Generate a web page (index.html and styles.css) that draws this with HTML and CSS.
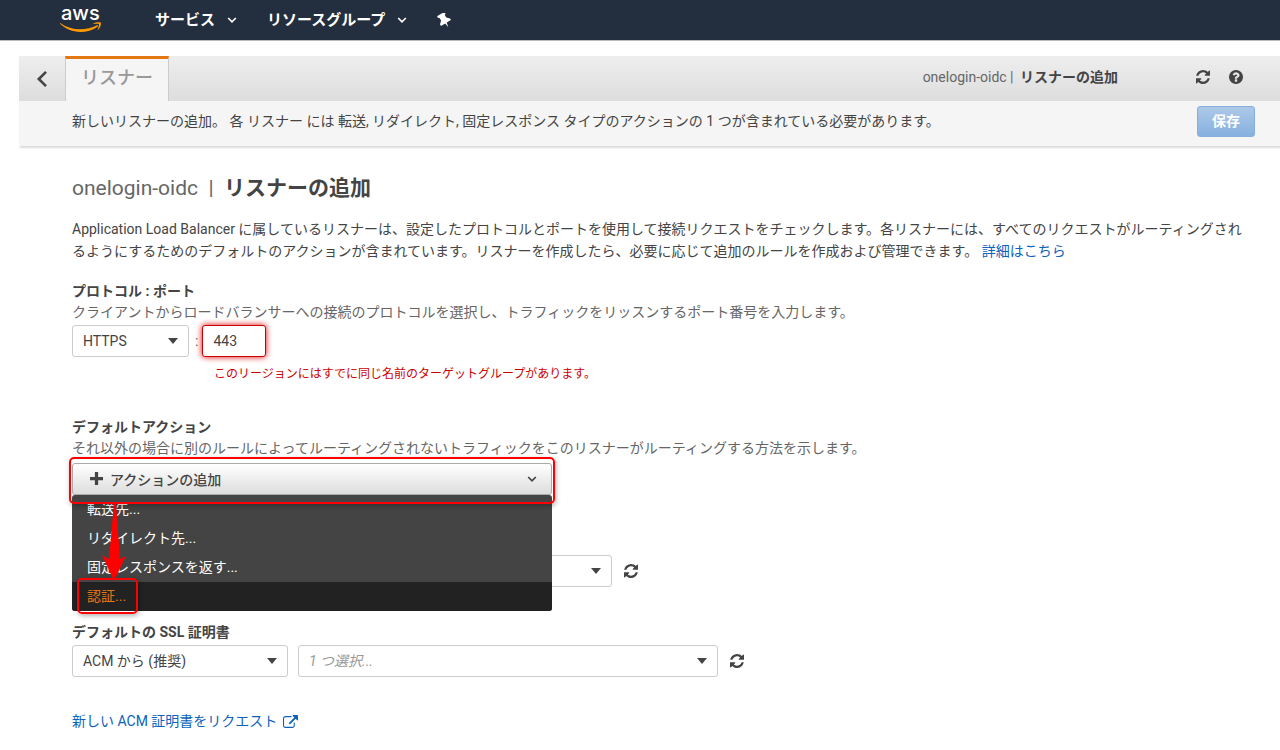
FILE: index.html
```html
<!DOCTYPE html>
<html lang="ja">
<head>
    <meta charset="UTF-8">
    <meta name="viewport" content="width=device-width, initial-scale=1.0">
    <title>リスナーの追加</title>
    <link rel="stylesheet" href="styles.css">
</head>
<body>
    <!-- Shared icons -->
    <svg class="sprite" aria-hidden="true">
        <symbol id="refresh" viewBox="0 0 1536 1536">
            <path d="M1511 928q0 5-1 7-64 268-268 434.5t-478 166.5q-146 0-282.5-55t-243.5-157l-129 129q-19 19-45 19t-45-19-19-45v-448q0-26 19-45t45-19h448q26 0 45 19t19 45-19 45l-137 137q71 66 161 102t187 36q134 0 250-65t186-179q11-17 53-117 8-23 30-23h192q13 0 22.5 9.5t9.5 22.5zm25-800v448q0 26-19 45t-45 19h-448q-26 0-45-19t-19-45 19-45l138-138q-148-137-349-137-134 0-250 65t-186 179q-11 17-53 117-8 23-30 23h-199q-13 0-22.5-9.5t-9.5-22.5v-7q65-268 270-434.5t480-166.5q146 0 284 55.5t245 156.5l130-129q19-19 45-19t45 19 19 45z"/>
        </symbol>
        <symbol id="chevron" viewBox="0 0 10 10">
            <path d="M1.2 3 5 6.8 8.8 3" fill="none" stroke="currentColor" stroke-width="1.7"/>
        </symbol>
    </svg>

    <header class="navbar">
        <a class="logo" href="#" aria-label="AWS">
            <svg width="44" height="40" viewBox="0 0 44 40">
                <text class="logo-text" x="1" y="20">aws</text>
                <path fill="#f90" d="M.6 23.200C6.500 27.200 13 29.200 20 29.200c6 0 12-1.400 17-3.900.8-.4 1.600.5.8 1.200C33 30.200 26.500 32 20.300 32 12.500 32 5.600 29 .4 24.100c-.6-.6-.3-1.200.2-.9z"/>
                <path fill="#f90" d="M33.400 23.500c2-1.500 5.400-1.600 7.200-1 .9.300.1 4.800-2.200 7-.4.400-.9.200-.6-.3.600-1.500 1.600-4.300 1.100-4.900-.6-.7-3.500-.4-5.200-.2-.5.1-.7-.3-.3-.6z"/>
            </svg>
        </a>
        <nav class="nav-links">
            <a href="#">サービス <svg class="chev"><use href="#chevron"/></svg></a>
            <a href="#">リソースグループ <svg class="chev"><use href="#chevron"/></svg></a>
            <a href="#" aria-label="ピン留め">
                <svg class="pin" viewBox="0 0 14 14">
                    <path transform="rotate(-30 7 7)" fill="currentColor" d="M3 0h8v2L9.800 2.600v2.900L12.400 8v1.700H7.800L7 14.200 6.200 9.700H1.600V8l2.600-2.500V2.600L3 2z"/>
                </svg>
            </a>
        </nav>
    </header>

    <div class="panel">
        <div class="tabbar">
            <button class="back" type="button" aria-label="戻る">
                <svg width="12" height="18" viewBox="0 0 12 18"><path d="M10 1.800 2.800 9l7.200 7.200" fill="none" stroke="#444" stroke-width="2.600"/></svg>
            </button>
            <a class="tab" href="#">リスナー</a>
            <div class="crumbs">onelogin-oidc | <b>リスナーの追加</b></div>
            <div class="tools">
                <button class="icon-btn" type="button" aria-label="更新"><svg class="icon"><use href="#refresh"/></svg></button>
                <button class="icon-btn" type="button" aria-label="ヘルプ">
                    <svg class="icon" viewBox="0 0 1536 1536"><path d="M896 1248v-192q0-14-9-23t-23-9h-192q-14 0-23 9t-9 23v192q0 14 9 23t23 9h192q14 0 23-9t9-23zm256-672q0-88-55.5-163t-138.5-116-170-41q-243 0-371 213-15 24 8 42l132 100q7 6 19 6 16 0 25-12 53-68 86-92 34-24 86-24 48 0 85.5 26t37.5 59q0 38-20 61t-68 45q-63 28-115.5 86.5t-52.5 125.5v36q0 14 9 23t23 9h192q14 0 23-9t9-23q0-19 21.5-49.5t54.5-49.5q32-18 49-28.5t46-35 44.5-48 28-60.5 12.5-81zm384 192q0 209-103 385.5t-279.5 279.5-385.5 103-385.5-103-279.5-279.5-103-385.5 103-385.5 279.5-279.5 385.5-103 385.5 103 279.5 279.5 103 385.5z"/></svg>
                </button>
            </div>
        </div>
        <div class="infobar">
            <span>新しいリスナーの追加。 各 リスナー には 転送, リダイレクト, 固定レスポンス タイプのアクションの 1 つが含まれている必要があります。</span>
            <button class="save" type="button">保存</button>
        </div>
    </div>

    <main>
        <h1><span>onelogin-oidc &nbsp;|</span> &nbsp;リスナーの追加</h1>
        <p class="intro">Application Load Balancer に属しているリスナーは、設定したプロトコルとポートを使用して接続リクエストをチェックします。各リスナーには、すべてのリクエストがルーティングされるようにするためのデフォルトのアクションが含まれています。リスナーを作成したら、必要に応じて追加のルールを作成および管理できます。 <a href="#">詳細はこちら</a></p>

        <!-- Protocol and port -->
        <section class="field">
            <label class="title" for="protocol">プロトコル : ポート</label>
            <p class="hint">クライアントからロードバランサーへの接続のプロトコルを選択し、トラフィックをリッスンするポート番号を入力します。</p>
            <div class="row">
                <div class="select protocol">
                    <select id="protocol"><option>HTTPS</option></select>
                </div>
                <span class="colon">:</span>
                <input class="port" type="text" value="443" aria-label="ポート" aria-describedby="portError">
            </div>
            <p class="error" id="portError">このリージョンにはすでに同じ名前のターゲットグループがあります。</p>
        </section>

        <!-- Default action -->
        <section class="field action">
            <h2 class="title">デフォルトアクション</h2>
            <p class="hint">それ以外の場合に別のルールによってルーティングされないトラフィックをこのリスナーがルーティングする方法を示します。</p>
            <div class="dropdown">
                <button class="add" type="button">
                    <svg class="plus" viewBox="0 0 12 12"><path d="M4.500 0h3v4.500H12v3H7.500V12h-3V7.500H0v-3h4.500z"/></svg>
                    アクションの追加
                    <svg class="chev"><use href="#chevron"/></svg>
                </button>
                <ul class="menu">
                    <li><a href="#">転送先...</a></li>
                    <li><a href="#">リダイレクト先...</a></li>
                    <li><a href="#">固定レスポンスを返す...</a></li>
                    <li><a class="active" href="#">認証...</a></li>
                </ul>
                <div class="mark mark-button"></div>
                <svg class="arrow" viewBox="0 0 24 78"><path fill="#f00" d="M12 0h2l4 56 6-3-12 25L0 52l7 4z"/></svg>
                <div class="mark mark-item"></div>
            </div>
        </section>

        <section class="field policy">
            <div class="row">
                <div class="select policy-select">
                    <select aria-label="セキュリティポリシー"><option></option></select>
                </div>
                <button class="icon-btn" type="button" aria-label="更新"><svg class="icon"><use href="#refresh"/></svg></button>
            </div>
        </section>

        <!-- Certificate -->
        <section class="field cert">
            <label class="title" for="certSource">デフォルトの SSL 証明書</label>
            <div class="row">
                <div class="select cert-source">
                    <select id="certSource"><option>ACM から (推奨)</option></select>
                </div>
                <div class="select cert-name">
                    <select class="empty" aria-label="証明書"><option>1 つ選択...</option></select>
                </div>
                <button class="icon-btn" type="button" aria-label="更新"><svg class="icon"><use href="#refresh"/></svg></button>
            </div>
        </section>

        <a class="request" href="#">新しい ACM 証明書をリクエスト
            <svg class="external" viewBox="0 0 1792 1664"><path d="M1408 928v320q0 119-84.5 203.5t-203.5 84.5h-832q-119 0-203.5-84.5t-84.5-203.5v-832q0-119 84.5-203.5t203.5-84.5h704q14 0 23 9t9 23v64q0 14-9 23t-23 9h-704q-66 0-113 47t-47 113v832q0 66 47 113t113 47h832q66 0 113-47t47-113v-320q0-14 9-23t23-9h64q14 0 23 9t9 23zm384-864v512q0 26-19 45t-45 19-45-19l-176-176-652 652q-10 10-23 10t-23-10l-114-114q-10-10-10-23t10-23l652-652-176-176q-19-19-19-45t19-45 45-19h512q26 0 45 19t19 45z"/></svg>
        </a>
    </main>
</body>
</html>
```
FILE: styles.css
```css
* {
    box-sizing: border-box;
}
body, button, input, select {
    font-family: Roboto, "Noto Sans CJK JP", sans-serif;
    font-size: 14px;
    color: #444;
}
body {
    margin: 0;
    background: #fff;
    line-height: 21px;
}
h1, h2, p, ul {
    margin: 0;
    padding: 0;
}
a {
    color: #0d62bc;
    text-decoration: none;
}
button {
    cursor: pointer;
}
.sprite {
    display: none;
}

/* Top navigation */
.navbar {
    display: flex;
    align-items: center;
    height: 41px;
    padding-left: 60px;
    background: #232f3e;
    border-bottom: 1px solid #bbb;
}
.logo {
    display: flex;
    width: 44px;
    margin-right: 51px;
}
.logo-text {
    font: 500 20px Inter, sans-serif;
    fill: #fff;
}
.nav-links {
    display: flex;
    gap: 30px;
}
.nav-links a {
    display: flex;
    align-items: center;
    gap: 12px;
    color: #fff;
    font-size: 15px;
    font-weight: bold;
}
.chev {
    width: 10px;
    height: 10px;
}
.pin {
    width: 15px;
    height: 15px;
}

/* Tab bar and info bar */
.panel {
    margin: 15px 0 0 19px;
    background: #f5f5f5;
    box-shadow: 1px 2px 2px rgba(0, 0, 0, 0.15);
}
.tabbar {
    display: flex;
    align-items: center;
    height: 45px;
    background: linear-gradient(#eee, #ddd);
}
.back {
    width: 46px;
    height: 45px;
    padding: 0;
    border: none;
    background: none;
}
.back svg {
    vertical-align: middle;
}
.tab {
    height: 45px;
    padding: 0 15px;
    border: 1px solid #ccc;
    border-width: 3px 1px 0;
    border-top-color: #e47911;
    background: #f5f5f5;
    color: #999;
    font-size: 18px;
    font-weight: 500;
    line-height: 38px;
}
.crumbs {
    margin-left: auto;
    padding-bottom: 2px;
    color: #666;
}
.crumbs b {
    margin-left: 3px;
    color: #444;
}
.tools {
    display: flex;
    gap: 19px;
    margin: 0 37px 0 78px;
    padding-bottom: 4px;
}
.icon-btn {
    display: flex;
    padding: 0;
    border: none;
    background: none;
}
.icon {
    width: 14px;
    height: 14px;
    fill: #444;
}
.infobar {
    display: flex;
    justify-content: space-between;
    height: 45px;
    padding: 5px 25px 0 53px;
    line-height: 30px;
}
.save {
    width: 58px;
    height: 31px;
    padding: 0 0 3px;
    border: 1px solid #85b0de;
    border-radius: 3px;
    background: linear-gradient(#adc8e8, #86b1de);
    color: #fff;
    font-weight: bold;
}

/* Form */
main {
    padding: 26px 30px 20px 72px;
}
h1 {
    font-size: 21px;
    line-height: 32px;
}
h1 span {
    color: #666;
    font-weight: normal;
}
.intro {
    margin-top: 14px;
    line-height: 22px;
}
.field {
    margin-top: 19px;
}
.title {
    display: block;
    font-size: 14px;
    font-weight: bold;
}
.hint {
    color: #666;
}
.row {
    display: flex;
    align-items: center;
    margin-top: 2px;
}
.select {
    position: relative;
}
.select::after {
    content: "";
    position: absolute;
    top: 13px;
    right: 11px;
    border: 5px solid transparent;
    border-top: 6px solid #444;
    border-bottom: none;
    pointer-events: none;
}
select, .port {
    width: 100%;
    height: 32px;
    padding: 0 10px;
    border: 1px solid #ccc;
    border-radius: 3px;
    background: #fff;
    appearance: none;
}
.empty {
    color: #999;
    font-style: italic;
}
.protocol {
    width: 117px;
}
.colon {
    margin: 0 4px 0 6px;
    color: #666;
}
.port {
    width: 64px;
    border-color: #c00;
    box-shadow: 0 0 6px #d00;
}
.error {
    margin: 7px 0 0 142px;
    color: #c00;
    font-size: 12px;
    line-height: 20px;
}
.action {
    margin-top: 33px;
}

/* Action menu */
.dropdown {
    position: relative;
    width: 480px;
    margin-top: 4px;
}
.add {
    display: flex;
    align-items: center;
    width: 100%;
    height: 32px;
    padding: 0 14px 1px 17px;
    border: 1px solid #aaa;
    border-radius: 3px;
    background: linear-gradient(#fff, #ddd);
    font-weight: 500;
}
.plus {
    width: 13px;
    height: 13px;
    margin-right: 7px;
    fill: #444;
}
.add .chev {
    margin-left: auto;
}
.menu {
    position: absolute;
    top: 32px;
    left: 0;
    z-index: 1;
    width: 100%;
    overflow: hidden;
    border-radius: 3px;
    background: #444;
    list-style: none;
}
.menu a {
    display: block;
    padding: 0 15px;
    color: #fff;
    line-height: 29px;
}
.menu .active {
    background: #222;
    color: #e47911;
}
.mark {
    position: absolute;
    z-index: 2;
    border: 2px solid #f00;
    border-radius: 5px;
    box-shadow: 1px 2px 5px rgba(0, 0, 0, 0.3);
    pointer-events: none;
}
.mark-button {
    top: -6px;
    left: -3px;
    width: 486px;
    height: 47px;
}
.mark-item {
    top: 115px;
    left: 5px;
    width: 61px;
    height: 36px;
}
.arrow {
    position: absolute;
    top: 40px;
    left: 30px;
    z-index: 2;
    width: 24px;
    height: 78px;
}
.policy {
    margin-top: 60px;
}
.policy-select {
    width: 540px;
}
.row .icon-btn {
    margin-left: 12px;
}
.cert {
    margin-top: 35px;
}
.cert-source {
    width: 216px;
    margin-right: 10px;
}
.cert-name {
    width: 420px;
}
.request {
    display: inline-flex;
    align-items: center;
    gap: 6px;
    margin-top: 34px;
}
.external {
    width: 15px;
    height: 14px;
    fill: #0d62bc;
}
```
